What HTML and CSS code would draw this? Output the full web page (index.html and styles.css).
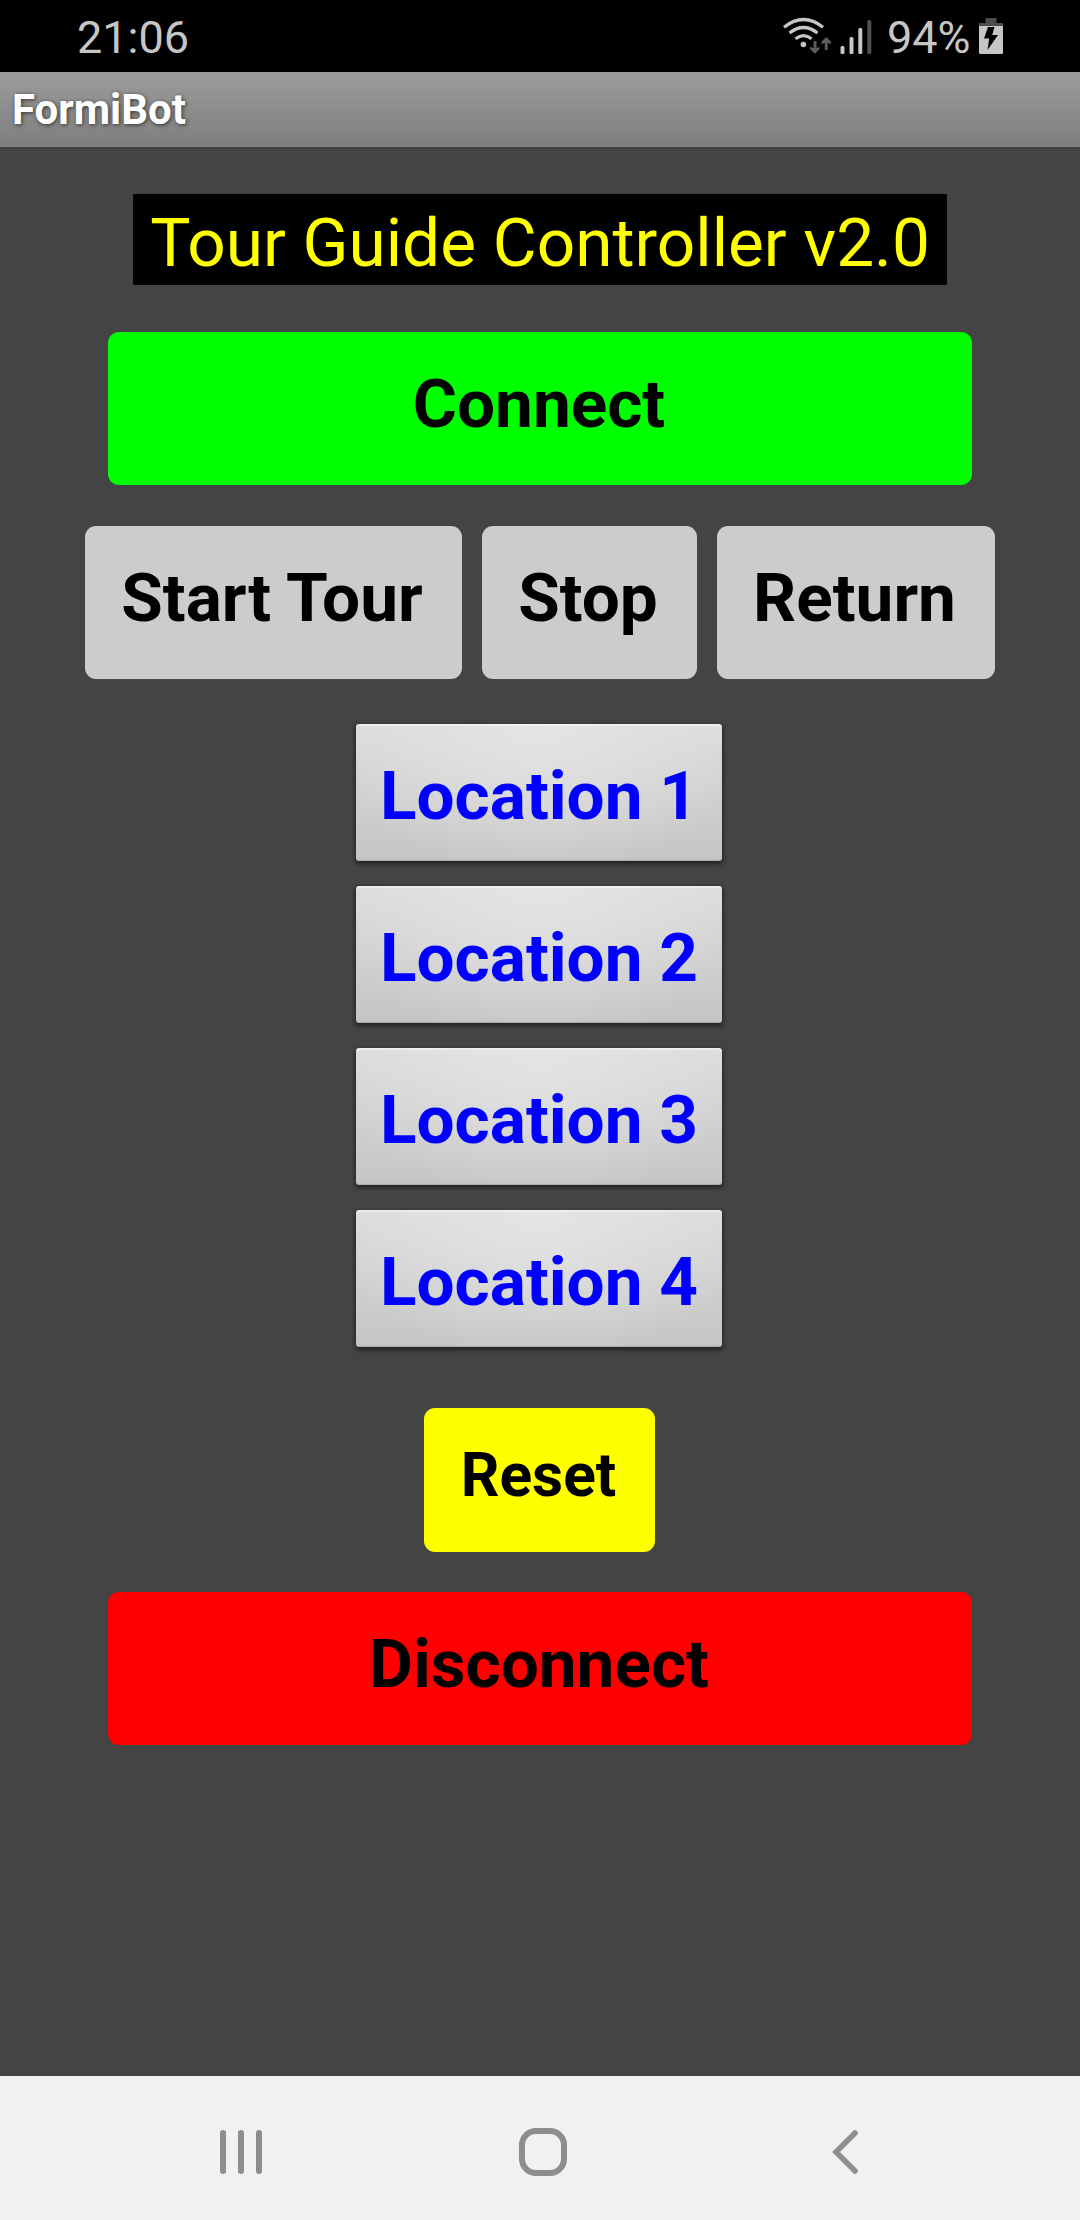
FILE: index.html
```html
<!DOCTYPE html>
<html lang="en">
<head>
<meta charset="utf-8">
<title>FormiBot</title>
<link rel="stylesheet" href="styles.css">
</head>
<body>
<header class="status">
  <span class="clock">21:06</span>
  <div class="indicators">
    <svg class="wifi" width="50" height="42" viewBox="782 15 50 42">
      <g fill="none" stroke="#c6c6c6" stroke-width="3.2">
        <path d="M784 27.2Q803.500 11.800 823 27.200"/>
        <path d="M789.500 33Q803.500 22 817.500 33"/>
        <path d="M795.500 38.800Q803.500 32.500 811.500 38.800"/>
      </g>
      <circle cx="803.400" cy="44.500" r="2.800" fill="#c6c6c6"/>
      <path d="M813.600 41h2.900v7l3-1v2.200l-4.500 4.600-5-4.600V47l3.600 1zM824.800 50h2.900v-7l3.300 1v-2.300l-4.700-4.600-4.800 4.600V44l3.300-1z" fill="#5c5c5c"/>
    </svg>
    <svg class="signal" width="32" height="36" viewBox="840 19 32 36">
      <rect x="840.500" y="46" width="4" height="8" rx="1.500" fill="#c6c6c6"/>
      <rect x="849.500" y="37" width="4" height="17" rx="1.500" fill="#c6c6c6"/>
      <rect x="858.300" y="28" width="4" height="26" rx="1.500" fill="#c6c6c6"/>
      <rect x="867.300" y="20" width="4" height="34" rx="1.500" fill="#4f4f4f"/>
    </svg>
    <span class="percent">94%</span>
    <svg class="battery" width="24" height="36" viewBox="0 0 24 36">
      <path d="M6.500 0h11v5H24v3H0V5h6.500z" fill="#4c4c4c"/>
      <path d="M0 8h24v26.500q0 1.500-1.500 1.500h-21Q0 36 0 34.500z" fill="#c6c6c6"/>
      <path d="M9 9h6.500l-2.300 8H19L8.500 32l1.700-11.500H5z" fill="#000"/>
    </svg>
  </div>
</header>
<div class="titlebar">FormiBot</div>
<main class="screen">
  <h1 class="banner">Tour Guide Controller v2.0</h1>
  <button class="btn wide connect">Connect</button>
  <div class="tour">
    <button class="btn start">Start Tour</button>
    <button class="btn stop">Stop</button>
    <button class="btn return">Return</button>
  </div>
  <div class="locations">
    <button class="location">Location 1</button>
    <button class="location">Location 2</button>
    <button class="location">Location 3</button>
    <button class="location">Location 4</button>
  </div>
  <button class="btn reset">Reset</button>
  <button class="btn wide disconnect">Disconnect</button>
</main>
<nav class="nav">
  <svg width="44" height="48" viewBox="0 0 44 48"><path d="M4 5v38M22 5v38M40 5v38" stroke="#8e8e8e" stroke-width="6" stroke-linecap="round"/></svg>
  <svg class="home" width="48" height="48" viewBox="0 0 48 48"><rect x="3" y="3" width="42" height="42" rx="14" fill="none" stroke="#8e8e8e" stroke-width="6"/></svg>
  <svg width="28" height="48" viewBox="0 0 28 48"><path d="M24 5L5 24l19 19" fill="none" stroke="#8e8e8e" stroke-width="5.500" stroke-linecap="round"/></svg>
</nav>
</body>
</html>
```
FILE: styles.css
```css
* { box-sizing: border-box; }
body {
  margin: 0;
  width: 1080px;
  height: 2220px;
  display: flex;
  flex-direction: column;
  background: #444;
  font-family: Roboto, "Liberation Sans", sans-serif;
}
svg { display: block; flex: none; }

.status {
  height: 72px;
  padding: 0 77px;
  display: flex;
  justify-content: space-between;
  background: #000;
  color: #c6c6c6;
  font-size: 45px;
  line-height: 75px;
}
.indicators { display: flex; }
.wifi { margin-top: 15px; }
.signal { margin: 19px 15px 0 8px; }
.percent { width: 92px; white-space: nowrap; }
.battery { margin-top: 18px; }

.titlebar {
  height: 75px;
  padding-left: 12px;
  background: linear-gradient(#9c9c9c, #7e7e7e);
  color: #fff;
  font-size: 42px;
  font-weight: 700;
  line-height: 75px;
  text-shadow: 1px 1px 4px rgba(0, 0, 0, .65);
}

.screen {
  flex: 1;
  display: flex;
  flex-direction: column;
  align-items: center;
  padding-top: 47px;
}
.banner {
  width: 814px;
  height: 91px;
  margin: 0 0 47px;
  background: #000;
  color: #ff0;
  font-size: 67.500px;
  font-weight: 400;
  line-height: 98px;
  text-align: center;
  white-space: nowrap;
}
.btn, .location {
  display: block;
  border: 0;
  padding: 0;
  font-family: inherit;
  font-size: 67.500px;
  font-weight: 700;
  text-align: center;
  white-space: nowrap;
}
.btn {
  height: 153px;
  padding: 0 2px 10px 0;
  border-radius: 11px;
  background: #ccc;
  color: #000;
  line-height: 143px;
}
.wide { width: 864px; }
.connect { background: #0f0; }
.tour {
  display: flex;
  gap: 20px;
  margin: 41px 0 45px;
  padding-right: 1px;
}
.tour .btn { padding-bottom: 9px; line-height: 144px; }
.start { width: 377px; }
.stop { width: 215px; }
.return { width: 278px; }

.locations {
  display: grid;
  gap: 25px;
  padding-right: 2px;
}
.location {
  width: 366px;
  height: 137px;
  padding-top: 7px;
  border-radius: 3px;
  background: radial-gradient(ellipse 60% 110% at 50% 0, #e4e4e4, rgba(216, 216, 216, 0)), linear-gradient(#dcdcdc, #c5c5c5);
  box-shadow: 0 2px 4px 1px rgba(0, 0, 0, .5), inset 0 2px 1px rgba(255, 255, 255, .45), inset 0 -1px 1px #aaa;
  color: #00f;
  line-height: 130px;
}
.reset {
  width: 231px;
  height: 144px;
  margin: 61px 1px 40px 0;
  padding-bottom: 8px;
  background: #ff0;
  font-size: 60.500px;
  line-height: 136px;
}
.disconnect {
  background: #f00;
  line-height: 144px;
  padding-bottom: 9px;
}

.nav {
  height: 144px;
  padding: 8px 221px 0 219px;
  display: flex;
  align-items: center;
  justify-content: space-between;
  background: #f1f1f1;
}
.home { margin-right: 8px; }
```
